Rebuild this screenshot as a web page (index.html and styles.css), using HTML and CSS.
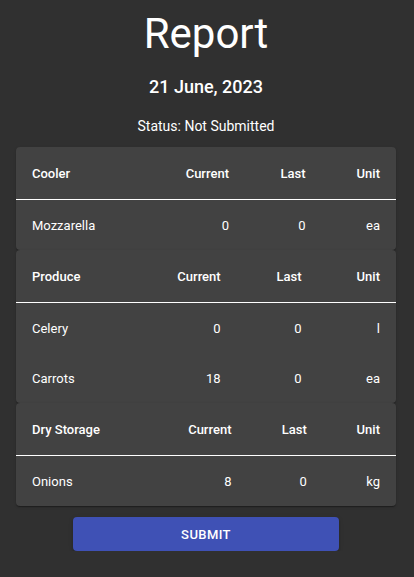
FILE: index.html
```html
<!DOCTYPE html>
<html lang="en">
<head>
<meta charset="utf-8">
<title>Report</title>
<link rel="stylesheet" href="styles.css">
</head>
<body>
<main class="page">
  <h1 class="title">Report</h1>
  <h2 class="date">21 June, 2023</h2>
  <p class="status">Status: Not Submitted</p>

  <section class="card">
    <table class="tbl">
      <thead>
        <tr><th class="name">Cooler</th><th>Current</th><th>Last</th><th>Unit</th></tr>
      </thead>
      <tbody>
        <tr><td class="name">Mozzarella</td><td>0</td><td>0</td><td>ea</td></tr>
      </tbody>
    </table>
  </section>

  <section class="card">
    <table class="tbl">
      <thead>
        <tr><th class="name">Produce</th><th>Current</th><th>Last</th><th>Unit</th></tr>
      </thead>
      <tbody>
        <tr><td class="name">Celery</td><td>0</td><td>0</td><td>l</td></tr>
        <tr><td class="name">Carrots</td><td>18</td><td>0</td><td>ea</td></tr>
      </tbody>
    </table>
  </section>

  <section class="card">
    <table class="tbl">
      <thead>
        <tr><th class="name">Dry Storage</th><th>Current</th><th>Last</th><th>Unit</th></tr>
      </thead>
      <tbody>
        <tr><td class="name">Onions</td><td>8</td><td>0</td><td>kg</td></tr>
      </tbody>
    </table>
  </section>

  <div class="actions">
    <button class="submit" type="button">Submit</button>
  </div>
</main>
</body>
</html>
```

FILE: styles.css
```css
html, body {
  margin: 0;
  padding: 0;
  background: #303030;
  color: #ffffff;
  font-family: Roboto, "Noto Sans", "Liberation Sans", sans-serif;
}

.page {
  width: 380px;
  padding: 9px 16px 0 16px;
  display: flex;
  flex-direction: column;
}

.title {
  margin: 0;
  font-size: 42px;
  line-height: 50px;
  font-weight: 400;
  text-align: center;
}

.date {
  margin: 16px 0 0 0;
  font-size: 18px;
  line-height: 24px;
  font-weight: 500;
  text-align: center;
}

.status {
  margin: 17px 0 0 0;
  font-size: 14px;
  line-height: 20px;
  font-weight: 400;
  text-align: center;
}

.card {
  background: #424242;
  border-radius: 4px;
  box-shadow: 0 2px 1px -1px rgba(0,0,0,0.2), 0 1px 1px 0 rgba(0,0,0,0.14), 0 1px 3px 0 rgba(0,0,0,0.12);
  overflow: hidden;
}

.status + .card {
  margin-top: 11px;
}

.tbl {
  width: 100%;
  border-collapse: separate;
  border-spacing: 0;
  font-size: 13px;
  line-height: 20px;
}

.tbl th,
.tbl td {
  padding: 16px 16px 14px 16px;
  text-align: right;
}

.tbl th {
  padding: 17px 16px 15px 16px;
  font-weight: 500;
  border-bottom: 1px solid #ffffff;
}

.tbl .name {
  text-align: left;
}

.actions {
  display: flex;
  justify-content: center;
  margin-top: 11px;
}

.submit {
  width: 266px;
  height: 34px;
  border: none;
  border-radius: 4px;
  background: #3f51b5;
  color: #ffffff;
  font-family: Roboto, "Noto Sans", "Liberation Sans", sans-serif;
  font-size: 13px;
  font-weight: 500;
  letter-spacing: 0.4px;
  text-transform: uppercase;
  box-shadow: 0 3px 1px -2px rgba(0,0,0,0.2), 0 2px 2px 0 rgba(0,0,0,0.14), 0 1px 5px 0 rgba(0,0,0,0.12);
}
```
